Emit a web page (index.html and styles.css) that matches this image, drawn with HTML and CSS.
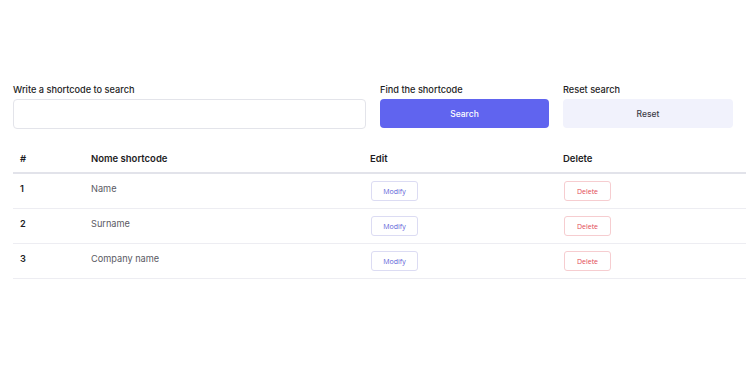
FILE: index.html
```html
<!DOCTYPE html>
<html lang="en">
<head>
    <meta charset="UTF-8">
    <meta name="viewport" content="width=device-width, initial-scale=1.0">
    <title>Shortcodes</title>
    <link rel="stylesheet" href="styles.css">
</head>
<body>
    <div class="page">
        <!-- Search form -->
        <form class="search-form" onsubmit="return false;">
            <div class="field">
                <label for="shortcode">Write a shortcode to search</label>
                <input id="shortcode" type="text" class="input">
            </div>
            <div class="field">
                <label>Find the shortcode</label>
                <button type="submit" class="btn btn-primary">Search</button>
            </div>
            <div class="field">
                <label>Reset search</label>
                <button type="reset" class="btn btn-light">Reset</button>
            </div>
        </form>

        <!-- Shortcodes table -->
        <table class="table">
            <thead>
                <tr>
                    <th class="col-id">#</th>
                    <th class="col-name">Nome shortcode</th>
                    <th class="col-edit">Edit</th>
                    <th>Delete</th>
                </tr>
            </thead>
            <tbody>
                <tr>
                    <td class="num">1</td>
                    <td>Name</td>
                    <td class="action"><button class="btn-sm btn-modify">Modify</button></td>
                    <td class="action"><button class="btn-sm btn-delete">Delete</button></td>
                </tr>
                <tr>
                    <td class="num">2</td>
                    <td>Surname</td>
                    <td class="action"><button class="btn-sm btn-modify">Modify</button></td>
                    <td class="action"><button class="btn-sm btn-delete">Delete</button></td>
                </tr>
                <tr>
                    <td class="num">3</td>
                    <td>Company name</td>
                    <td class="action"><button class="btn-sm btn-modify">Modify</button></td>
                    <td class="action"><button class="btn-sm btn-delete">Delete</button></td>
                </tr>
            </tbody>
        </table>
    </div>
</body>
</html>
```

FILE: styles.css
```css
body {
    margin: 0;
    background-color: #fff;
    color: #1d1d24;
    font-family: 'Inter', 'Noto Sans', sans-serif;
}

.page {
    width: 733px;
    padding: 84px 0 0 13px;
}

/* Formulario de busqueda */
.search-form {
    display: grid;
    grid-template-columns: 353px 169px 170px;
    column-gap: 14px;
    margin: 0;
}

.field {
    display: flex;
    flex-direction: column;
}

.field label {
    font-size: 9.2px;
    font-weight: 500;
    line-height: 12px;
    margin-bottom: 3px;
    color: #1d1d24;
}

.input {
    box-sizing: border-box;
    height: 30px;
    border: 1px solid #e3e4ea;
    border-radius: 4px;
    padding: 0 10px;
    font-family: inherit;
}

.btn {
    height: 29px;
    border: none;
    border-radius: 4px;
    font-family: 'Inter', sans-serif;
    font-size: 8.5px;
    font-weight: 500;
    cursor: pointer;
}

.btn-primary {
    background-color: #6064ef;
    color: #fff;
}

.btn-light {
    background-color: #f1f2fc;
    color: #3d3d48;
}

/* Tabla */
.table {
    width: 733px;
    margin-top: 16px;
    border-collapse: collapse;
}

.table th {
    text-align: left;
    font-size: 9.5px;
    font-weight: 600;
    height: 27px;
    padding: 0 7px;
    border-bottom: 2px solid #e2e3ea;
}

.col-id { width: 57px; }
.col-name { width: 265px; }
.col-edit { width: 179px; }

.table td {
    vertical-align: top;
    padding: 9px 7px 13px;
    line-height: 12px;
    font-size: 9.2px;
    color: #5a5a63;
    border-bottom: 1px solid #ededf2;
}

.table td.num {
    color: #1d1d24;
    font-weight: 600;
}

.table td.action {
    padding-top: 7px;
    padding-bottom: 7px;
}

.btn-sm {
    display: block;
    width: 47px;
    height: 20px;
    margin-left: 1px;
    background-color: #fff;
    border-radius: 3px;
    font-family: 'Open Sans', sans-serif;
    font-size: 7px;
    cursor: pointer;
}

.btn-modify {
    border: 1px solid #dcdcf3;
    color: #6063d8;
}

.btn-delete {
    border: 1px solid #f6cdd0;
    color: #e24a55;
}
```
